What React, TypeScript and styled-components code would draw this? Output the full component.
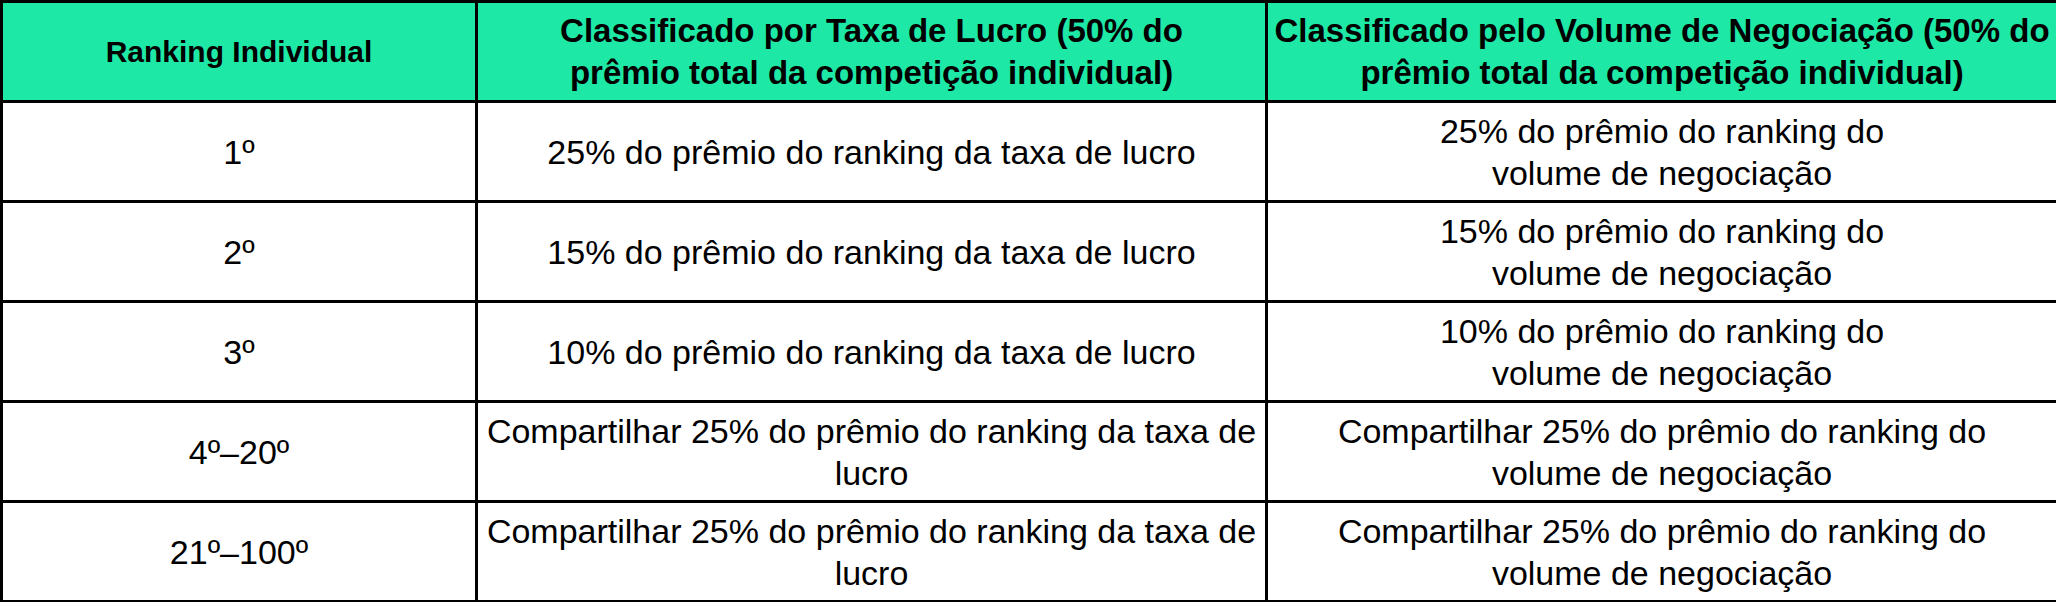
import React from "react";
import styled, { createGlobalStyle } from "styled-components";

const GlobalStyle = createGlobalStyle`
    html, body {
        margin: 0;
        padding: 0;
        background: #ffffff;
    }
    body {
        font-family: "Liberation Sans", Arial, sans-serif;
        color: #000000;
    }
`;

const Table = styled.table`
    width: 2056px;
    border-collapse: collapse;
    table-layout: fixed;
    font-size: 34px;
    line-height: 42px;
`;

const HeadCell = styled.th<{ small?: boolean }>`
    background: #1ee8a6;
    font-weight: 700;
    font-size: ${props => props.small ? '30px' : '33px'};
    height: 97px;
    padding: 0 2px;
    border: 3px solid #000;
    text-align: center;
    vertical-align: middle;
    white-space: nowrap;
`;

const Cell = styled.td`
    height: 97px;
    padding: 0 2px;
    border: 3px solid #000;
    text-align: center;
    vertical-align: middle;
    white-space: nowrap;
`;

type Row = {
    rank: string;
    profit: React.ReactNode;
    volume: React.ReactNode;
};

const rows: Row[] = [
    {
        rank: "1º",
        profit: "25% do prêmio do ranking da taxa de lucro",
        volume: <>25% do prêmio do ranking do<br />volume de negociação</>,
    },
    {
        rank: "2º",
        profit: "15% do prêmio do ranking da taxa de lucro",
        volume: <>15% do prêmio do ranking do<br />volume de negociação</>,
    },
    {
        rank: "3º",
        profit: "10% do prêmio do ranking da taxa de lucro",
        volume: <>10% do prêmio do ranking do<br />volume de negociação</>,
    },
    {
        rank: "4º–20º",
        profit: <>Compartilhar 25% do prêmio do ranking da taxa de<br />lucro</>,
        volume: <>Compartilhar 25% do prêmio do ranking do<br />volume de negociação</>,
    },
    {
        rank: "21º–100º",
        profit: <>Compartilhar 25% do prêmio do ranking da taxa de<br />lucro</>,
        volume: <>Compartilhar 25% do prêmio do ranking do<br />volume de negociação</>,
    },
];

export default function App() {
    return (
        <>
            <GlobalStyle />
            <Table>
                <colgroup>
                    <col style={{ width: 475 }} />
                    <col style={{ width: 790 }} />
                    <col style={{ width: 791 }} />
                </colgroup>
                <thead>
                    <tr>
                        <HeadCell small>Ranking Individual</HeadCell>
                        <HeadCell>
                            Classificado por Taxa de Lucro (50% do
                            <br />
                            prêmio total da competição individual)
                        </HeadCell>
                        <HeadCell>
                            Classificado pelo Volume de Negociação (50% do
                            <br />
                            prêmio total da competição individual)
                        </HeadCell>
                    </tr>
                </thead>
                <tbody>
                    {rows.map(r => (
                        <tr key={r.rank}>
                            <Cell>{r.rank}</Cell>
                            <Cell>{r.profit}</Cell>
                            <Cell>{r.volume}</Cell>
                        </tr>
                    ))}
                </tbody>
            </Table>
        </>
    );
}
